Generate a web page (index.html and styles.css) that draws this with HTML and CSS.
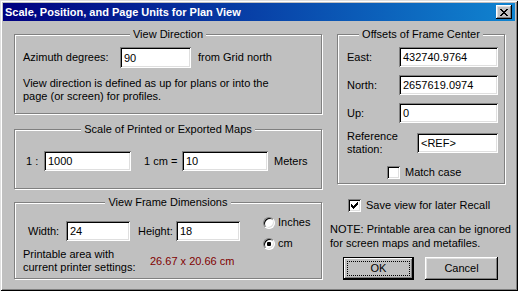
FILE: index.html
```html
<!DOCTYPE html>
<html>
<head>
<meta charset="utf-8">
<link rel="stylesheet" href="styles.css">
</head>
<body>
<div class="window">
  <div class="titlebar">
    <span class="title">Scale, Position, and Page Units for Plan View</span>
    <span class="close"><svg width="8" height="7" viewBox="0 0 8 7" shape-rendering="crispEdges"><path d="M0 0h2v1h-2z M6 0h2v1h-2z M1 1h2v1h-2z M5 1h2v1h-2z M2 2h4v1h-4z M3 3h2v1h-2z M2 4h4v1h-4z M1 5h2v1h-2z M5 5h2v1h-2z M0 6h2v1h-2z M6 6h2v1h-2z" fill="#000"/></svg></span>
  </div>
  <div class="content">
    <div class="col-left">
      <div class="group g-dir">
        <div class="legend"><span>View Direction</span></div>
        <div class="row">
          <span class="lbl w-az">Azimuth degrees:</span>
          <span class="field f-az">90</span>
          <span class="after-az">from Grid north</span>
        </div>
        <p class="para">View direction is defined as up for plans or into the<br>page (or screen) for profiles.</p>
      </div>
      <div class="group g-scale">
        <div class="legend"><span>Scale of Printed or Exported Maps</span></div>
        <div class="row">
          <span class="lbl w-ratio">1 :</span>
          <span class="field f-ratio">1000</span>
          <span class="lbl w-cm">1 cm =</span>
          <span class="field f-cm">10</span>
          <span class="meters">Meters</span>
        </div>
      </div>
      <div class="group g-frame">
        <div class="legend"><span>View Frame Dimensions</span></div>
        <div class="frame-main">
          <div class="row dims">
            <span class="lbl w-dim">Width:</span>
            <span class="field f-dim">24</span>
            <span class="lbl w-dim h-lbl">Height:</span>
            <span class="field f-dim">18</span>
          </div>
          <div class="row printable">
            <span class="pa-lbl">Printable area with<br>current printer settings:</span>
            <span class="pa-val">26.67 x 20.66 cm</span>
          </div>
        </div>
        <div class="radios">
          <div class="opt"><span class="radio"></span><span class="opt-lbl">Inches</span></div>
          <div class="opt"><span class="radio on"></span><span class="opt-lbl">cm</span></div>
        </div>
      </div>
    </div>
    <div class="col-right">
      <div class="group g-off">
        <div class="legend"><span>Offsets of Frame Center</span></div>
        <div class="row off-row">
          <span class="lbl w-off">East:</span>
          <span class="field f-off">432740.9764</span>
        </div>
        <div class="row off-row">
          <span class="lbl w-off">North:</span>
          <span class="field f-off">2657619.0974</span>
        </div>
        <div class="row off-row">
          <span class="lbl w-off">Up:</span>
          <span class="field f-off">0</span>
        </div>
        <div class="row ref-row">
          <span class="lbl w-ref">Reference<br>station:</span>
          <span class="field f-ref">&lt;REF&gt;</span>
        </div>
        <div class="row match-row">
          <span class="check"></span>
          <span class="chk-lbl">Match case</span>
        </div>
      </div>
      <div class="row save-row">
        <span class="check"><svg width="7" height="7" viewBox="0 0 7 7" shape-rendering="crispEdges"><path d="M0 2h1v3h-1z M1 3h1v3h-1z M2 4h1v3h-1z M3 3h1v3h-1z M4 2h1v3h-1z M5 1h1v3h-1z M6 0h1v3h-1z" fill="#000"/></svg></span>
        <span class="chk-lbl">Save view for later Recall</span>
      </div>
      <p class="note">NOTE: Printable area can be ignored<br>for screen maps and metafiles.</p>
      <div class="row buttons">
        <span class="btn btn-default">OK</span>
        <span class="btn btn-cancel">Cancel</span>
      </div>
    </div>
  </div>
</div>
</body>
</html>
```
FILE: styles.css
```css
* { box-sizing: border-box; }
html, body { margin: 0; padding: 0; }
body {
  width: 518px; height: 291px; overflow: hidden;
  font-family: "Liberation Sans", Arial, sans-serif;
  font-size: 11px; line-height: 13px; color: #000;
  background: #c0c0c0;
}
.window {
  width: 518px; height: 291px; padding: 3px;
  background: #c0c0c0;
  box-shadow: inset 1px 1px #dfdfdf, inset -1px -1px #000, inset 2px 2px #fff, inset -2px -2px #808080;
}
.titlebar {
  height: 18px; display: flex; align-items: center; justify-content: space-between;
  padding: 0 3px 0 2px;
  background: linear-gradient(to right, #000080, #1084d0);
}
.title { color: #fff; font-weight: bold; font-size: 11px; white-space: nowrap; }
.close {
  width: 16px; height: 14px; background: #c0c0c0;
  display: flex; align-items: center; justify-content: center;
  box-shadow: inset -1px -1px #000, inset 1px 1px #fff, inset -2px -2px #808080, inset 2px 2px #dfdfdf;
}
.close svg { display: block; margin-left: -1px; }
.content { display: flex; gap: 15px; padding: 13px 0 0 11px; }
.col-left { width: 308px; display: flex; flex-direction: column; }
.col-right { width: 168px; display: flex; flex-direction: column; }
.group {
  position: relative;
  border: 1px solid #808080;
  box-shadow: inset 1px 1px #fff, 1px 1px #fff;
}
.legend {
  position: absolute; top: -7px; left: 0; right: 0;
  display: flex; justify-content: center;
}
.legend span { background: #c0c0c0; padding: 0 3px; white-space: nowrap; }
.row { display: flex; align-items: center; white-space: nowrap; }
.lbl { flex: none; }
.field {
  flex: none; height: 20px; background: #fff;
  display: flex; align-items: center; padding-left: 4px; padding-top: 1px;
  box-shadow: inset 1px 1px #808080, inset -1px -1px #fff, inset 2px 2px #000, inset -2px -2px #dfdfdf;
}
/* View Direction */
.g-dir { height: 80px; padding: 12px 0 0 8px; }
.w-az { width: 97px; }
.f-az { width: 71px; height: 21px; }
.after-az { margin-left: 7px; }
.para { margin: 9px 0 0 0; }
/* Scale */
.g-scale { height: 60px; margin-top: 15px; padding: 21px 0 0 11px; }
.w-ratio { width: 18px; }
.f-ratio { width: 87px; }
.w-cm { width: 38px; margin-left: 13px; }
.f-cm { width: 86px; }
.meters { margin-left: 6px; }
/* Frame dims */
.g-frame {
  height: 77px; margin-top: 13px; padding: 13px 0 0 8px;
  display: grid; grid-template-columns: 240px auto; align-items: start;
}
.dims { margin: 5px 0 0 5px; }
.w-dim { width: 38px; }
.f-dim { width: 64px; }
.h-lbl { margin-left: 8px; }
.printable { margin-top: 7px; }
.pa-lbl { width: 127px; }
.pa-val { color: #800000; }
.radios { display: flex; flex-direction: column; gap: 8px; }
.opt { display: flex; align-items: center; height: 13px; }
.opt-lbl { margin-left: 3px; }
.radio {
  width: 12px; height: 12px; border-radius: 50%; background: #fff;
  border: 1px solid; border-color: #808080 #fff #fff #808080;
  box-shadow: inset 1px 1px #000, inset -1px -1px #dfdfdf;
  display: flex; align-items: center; justify-content: center;
}
.radio.on::after { content: ""; width: 4px; height: 4px; border-radius: 1px; background: #000; }
/* Offsets */
.g-off { height: 150px; padding: 12px 0 0 9px; }
.off-row + .off-row { margin-top: 8px; }
.w-off { width: 52px; }
.f-off { width: 99px; }
.ref-row { margin-top: 7px; height: 26px; }
.w-ref { width: 70px; }
.f-ref { width: 81px; }
.match-row { margin: 10px 0 0 40px; height: 13px; }
.check {
  flex: none; width: 13px; height: 13px; background: #fff;
  display: flex; align-items: center; justify-content: center;
  box-shadow: inset 1px 1px #808080, inset -1px -1px #fff, inset 2px 2px #000, inset -2px -2px #dfdfdf;
}
.check svg { display: block; }
.chk-lbl { margin-left: 5px; }
.save-row { margin: 15px 0 0 11px; height: 13px; }
.note { margin: 10px 0 0 -7px; line-height: 14px; white-space: nowrap; }
.buttons { margin: 7px 0 0 6px; gap: 11px; }
.btn {
  position: relative; height: 23px;
  display: flex; align-items: center; justify-content: center;
  background: #c0c0c0;
}
.btn-default {
  width: 71px; border: 1px solid #000;
  box-shadow: inset -1px -1px #000, inset 1px 1px #fff, inset -2px -2px #808080;
}
.btn-default::after {
  content: ""; position: absolute; top: 3px; left: 3px; right: 3px; bottom: 3px;
  border: 1px dotted #000;
}
.btn-cancel {
  width: 73px;
  box-shadow: inset -1px -1px #000, inset 1px 1px #fff, inset -2px -2px #808080, inset 2px 2px #dfdfdf;
}
```
